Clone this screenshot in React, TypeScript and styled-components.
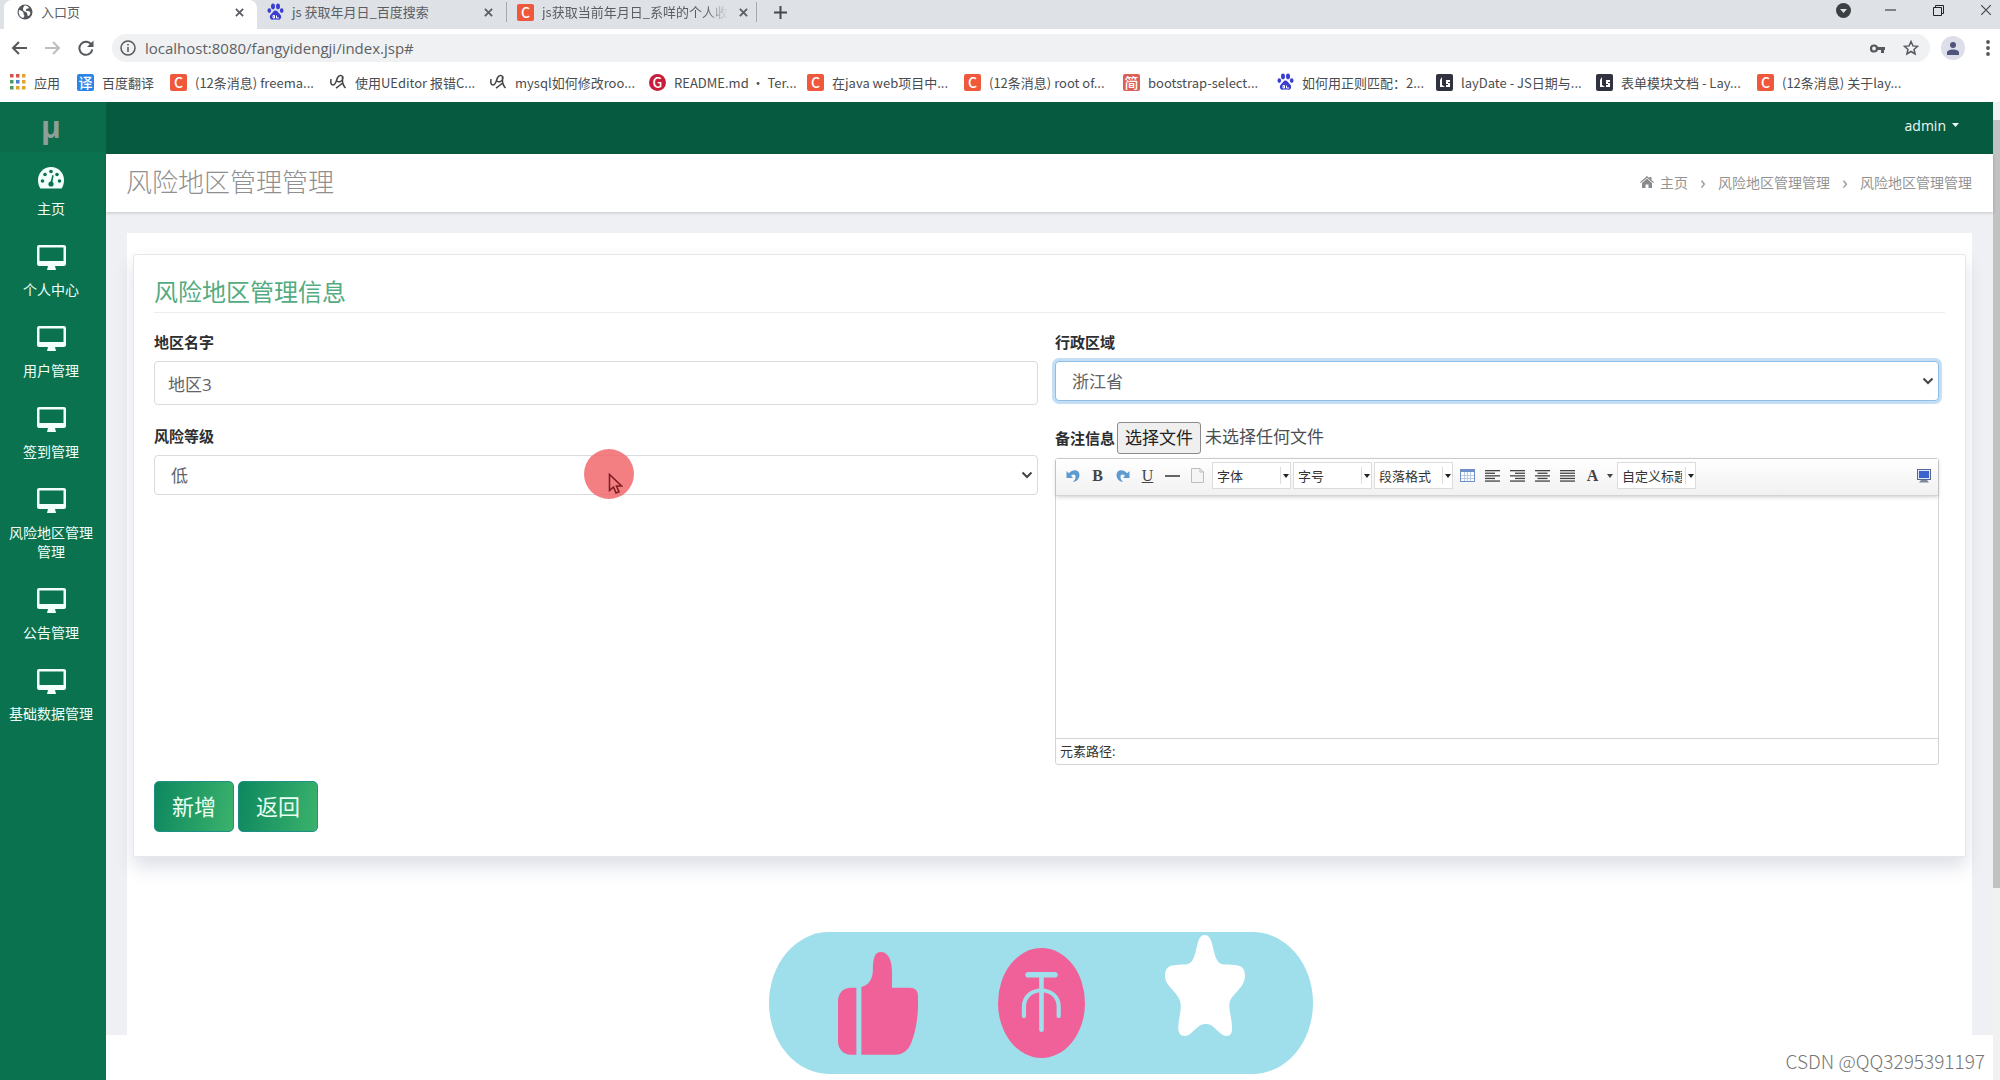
import React from "react";
import styled, { createGlobalStyle, css } from "styled-components";

const Global = createGlobalStyle`
  *, *::before, *::after { box-sizing: border-box; }
  body { margin: 0; background: #fff; }
  body, button, input, select, textarea {
    font-family: "Open Sans", "Noto Sans CJK SC", sans-serif;
  }
  h1, h2, p, ul, ol { margin: 0; padding: 0; list-style: none; }
  button { padding: 0; border: 0; background: none; color: inherit; }
  a { color: inherit; text-decoration: none; }
  svg { display: block; flex: none; }
`;

const Screen = styled.div`
  position: relative;
  display: flex;
  flex-direction: column;
  height: 100vh;
  overflow: hidden;
`;

/* ---------- browser frame ---------- */

const TabStrip = styled.div`
  display: flex;
  justify-content: space-between;
  height: 29px;
  flex: none;
  background: #dee1e6;
  color: #45494d;
`;

const Tabs = styled.div`
  display: flex;
  padding-left: 4px;
`;

const Tab = styled.div<{ $active?: boolean }>`
  display: flex;
  align-items: center;
  gap: 8px;
  width: ${(p) => (p.$active ? 253 : 249)}px;
  padding: 0 10px 5px ${(p) => (p.$active ? 13 : 10)}px;
  font-family: "Noto Sans CJK SC", sans-serif;
  font-size: 13px;
  color: #5a5e63;
  ${(p) =>
    p.$active &&
    css`
      background: #fff;
      border-radius: 8px 8px 0 0;
    `}
`;

const TabTitle = styled.span<{ $fade?: boolean }>`
  flex: 1;
  white-space: nowrap;
  line-height: 20px;
  ${(p) => p.$fade && css`mask-image: linear-gradient(90deg, #000 88%, transparent);`}
`;

const TabDivider = styled.span`
  width: 1px;
  height: 20px;
  margin-top: 2px;
  background: #a5a8ad;
`;

const IconButton = styled.button<{ $w?: number }>`
  display: flex;
  align-items: center;
  justify-content: center;
  flex: none;
  width: ${(p) => p.$w ?? 16}px;
  height: 24px;
`;

const WindowControls = styled.div`
  display: flex;
  height: 20px;
  align-items: center;

  button:last-child {
    padding-left: 10px;
  }
`;

const AddressRow = styled.div`
  display: flex;
  align-items: center;
  height: 38px;
  flex: none;
  padding-left: 2px;
  background: #fff;
  color: #55595d;
`;

const Omnibox = styled.div`
  display: flex;
  align-items: center;
  flex: 1;
  height: 28px;
  margin-left: 9px;
  padding: 0 3px 0 8px;
  border-radius: 14px;
  background: #f0f1f3;
`;

const UrlInput = styled.input`
  flex: 1;
  padding: 0 0 0 9px;
  border: 0;
  outline: 0;
  background: none;
  font-size: 15px;
  color: #5d6165;
`;

const Avatar = styled.span`
  display: flex;
  align-items: center;
  justify-content: center;
  width: 24px;
  height: 24px;
  border-radius: 50%;
  background: #dcdfea;
`;

const Bookmarks = styled.nav`
  display: flex;
  align-items: center;
  height: 35px;
  flex: none;
  padding: 0 10px 5px;
  background: #fff;
`;

const Bookmark = styled.a<{ $w: number }>`
  display: flex;
  align-items: center;
  gap: 8px;
  width: ${(p) => p.$w}px;
  flex: none;
  white-space: nowrap;
  font-family: "Noto Sans CJK SC", sans-serif;
  font-size: 13px;
  color: #4a4d50;
`;

const Favicon = styled.span<{ $bg: string; $round?: boolean }>`
  display: flex;
  align-items: center;
  justify-content: center;
  flex: none;
  width: 17px;
  height: 17px;
  border-radius: ${(p) => (p.$round ? "50%" : "2px")};
  background: ${(p) => p.$bg};
  color: #fff;
  font-size: 14px;
  line-height: 17px;
  font-weight: 500;
`;

/* ---------- application ---------- */

const Viewport = styled.div`
  display: flex;
  flex: 1;
  min-height: 0;
`;

const Sidebar = styled.aside`
  width: 106px;
  flex: none;
  background: #0b7250;
  color: #f0fff8;
`;

const Brand = styled.a`
  display: flex;
  align-items: center;
  justify-content: center;
  height: 50px;
  padding: 0 4px 2px 0;
  background: #0a6c4b;
  color: #8d9f96;
  font-size: 30px;
  font-weight: 700;
`;

const MenuItem = styled.a`
  display: flex;
  flex-direction: column;
  align-items: center;
  gap: 9px;
  padding: 12px 12px 15px 8px;
  font-size: 14px;
  line-height: 19px;
  text-align: center;
`;

const Main = styled.div`
  display: flex;
  flex-direction: column;
  flex: 1;
  min-width: 0;
`;

const TopBar = styled.header`
  display: flex;
  align-items: center;
  justify-content: flex-end;
  height: 52px;
  flex: none;
  padding: 0 34px 6px 0;
  background: #065a40;
`;

const UserButton = styled.button`
  display: flex;
  align-items: center;
  gap: 6px;
  color: #eef8f4;
  font-size: 14px;
`;

const PageHead = styled.div`
  display: flex;
  align-items: center;
  justify-content: space-between;
  height: 58px;
  flex: none;
  padding: 0 21px 2px 20px;
  background: #fff;
  box-shadow: 0 1px 3px rgba(0, 0, 0, 0.18);
  z-index: 1;
`;

const PageTitle = styled.h1`
  font-size: 26px;
  font-weight: 300;
  line-height: 36px;
  color: #8f8f8f;
`;

const Crumbs = styled.ol`
  display: flex;
  align-items: center;
  font-size: 14px;
  color: #949494;

  li {
    display: flex;
    align-items: center;
    gap: 6px;
  }
  li + li::before {
    content: "›";
    width: 30px;
    margin-right: -6px;
    text-align: center;
    font-size: 18px;
    line-height: 20px;
  }
`;

const Content = styled.main`
  display: flex;
  flex: 1;
  padding: 21px 21px 0;
  background: #eff0f3;
`;

const Panel = styled.div`
  flex: 1;
  padding: 21px 6px;
  background: #fff;
`;

const PageFoot = styled.div`
  height: 45px;
  flex: none;
  background: #fff;
`;

const Card = styled.section`
  padding: 18px 20px 24px;
  border: 1px solid #e6e7ea;
  border-radius: 2px;
  background: #fff;
  box-shadow: 0 10px 18px rgba(60, 70, 120, 0.17);
`;

const CardTitle = styled.h2`
  padding-bottom: 2px;
  border-bottom: 1px solid #ececee;
  font-size: 24px;
  font-weight: 400;
  line-height: 37px;
  color: #55ab80;
`;

const Form = styled.form`
  padding: 17px 6px 0 0;
`;

const Columns = styled.div`
  display: grid;
  grid-template-columns: 1fr 1fr;
  gap: 17px;
  margin-bottom: 16px;
`;

const Field = styled.div`
  margin-bottom: 19px;
`;

const Label = styled.label`
  font-size: 15px;
  font-weight: 700;
  line-height: 24px;
  color: #2c2e30;
`;

const FieldLabel = styled(Label)`
  display: block;
  margin-bottom: 7px;
`;

const control = css`
  display: block;
  width: 100%;
  border: 1px solid #d9dbde;
  border-radius: 4px;
  outline: 0;
  background: #fff;
  color: #5f6468;
  font-size: 17px;
`;

const TextInput = styled.input`
  ${control}
  height: 44px;
  padding: 0 13px;
`;

const SelectBox = styled.div`
  position: relative;
`;

const Select = styled.select<{ $focus?: boolean }>`
  ${control}
  appearance: none;
  height: 40px;
  padding: 0 16px;
  ${(p) =>
    p.$focus &&
    css`
      border-color: #90bde8;
      box-shadow: 0 0 0 3px #c3def5;
    `}
`;

const Chevron = styled.svg`
  position: absolute;
  right: 5px;
  top: 50%;
  margin-top: -4px;
  pointer-events: none;
`;

const FileRow = styled.div`
  display: flex;
  align-items: center;
  height: 32px;
  margin: 21px 0 4px;
`;

const FileInput = styled.input`
  position: absolute;
  width: 1px;
  height: 1px;
  opacity: 0;
`;

const FileButton = styled.button`
  height: 32px;
  margin: 0 4px 0 2px;
  padding: 0 7px;
  border: 1px solid #8b8b8b;
  border-radius: 3px;
  background: #efefef;
  color: #222;
  font-size: 17px;
  line-height: 28px;
`;

const FileName = styled.span`
  font-size: 17px;
  line-height: 28px;
  padding-bottom: 2px;
  color: #4c4f52;
`;

const Editor = styled.div`
  border: 1px solid #d4d4d4;
  border-radius: 3px;
`;

const EditorBar = styled.div`
  display: flex;
  align-items: center;
  gap: 2px;
  height: 37px;
  padding: 0 4px 3px;
  border-bottom: 1px solid #d4d4d4;
  background: linear-gradient(#fff, #f1f1f1);
  box-shadow: 0 1px 4px rgba(0, 0, 0, 0.2);
`;

const ToolGroup = styled.div<{ $push?: boolean }>`
  display: flex;
  align-items: center;
  ${(p) => p.$push && css`margin-left: auto;`}
`;

const Tool = styled(IconButton)`
  font-family: "Liberation Serif", serif;
  font-size: 16px;
  color: #444;
`;

const ToolSelectBox = styled.div`
  position: relative;
  width: 79px;

  svg {
    position: absolute;
    right: 0;
    top: 5px;
    pointer-events: none;
  }
`;

const ToolSelect = styled.select`
  display: block;
  appearance: none;
  width: 100%;
  height: 27px;
  padding: 0 13px 0 4px;
  border: 1px solid #dcdcdc;
  border-radius: 0;
  background: #fff;
  color: #333;
  font-size: 13px;
`;

const EditorArea = styled.textarea`
  display: block;
  width: 100%;
  height: 242px;
  border: 0;
  outline: 0;
  resize: none;
  background: transparent;
`;

const EditorPath = styled.div`
  height: 26px;
  padding-left: 4px;
  border-top: 1px solid #d4d4d4;
  font-size: 13px;
  line-height: 25px;
  color: #333;
`;

const Actions = styled.div`
  display: flex;
  gap: 4px;
`;

const ActionButton = styled.button`
  width: 80px;
  height: 51px;
  padding-bottom: 4px;
  border: 1px solid #1f9087;
  border-radius: 5px;
  background: linear-gradient(100deg, #0d885f, #3bb26c);
  color: #eafff3;
  font-size: 22px;
`;

const ScrollTrack = styled.div`
  width: 7px;
  flex: none;
  padding-top: 18px;
  background: #f1f1f1;
`;

const ScrollThumb = styled.div`
  height: 80%;
  background: #c1c1c1;
`;

/* ---------- overlays ---------- */

const Pointer = styled.div`
  position: absolute;
  left: 584px;
  top: 449px;
  width: 50px;
  height: 50px;
  padding: 24px 0 0 24px;
  border-radius: 50%;
  background: rgba(242, 103, 106, 0.84);
`;

const Reactions = styled.div`
  position: absolute;
  left: 769px;
  bottom: 6px;
  display: flex;
  align-items: center;
  gap: 80px;
  width: 544px;
  height: 142px;
  padding-left: 69px;
  border-radius: 60px / 71px;
  background: #9fdfeb;
`;

const StarIcon = styled.svg`
  align-self: flex-start;
  margin-top: 3px;
`;

const Watermark = styled.p`
  position: absolute;
  right: 15px;
  bottom: 7px;
  font-family: "Noto Sans CJK SC", sans-serif;
  font-size: 19px;
  font-weight: 300;
  line-height: 24px;
  color: #777;
`;

/* ---------- drawings ---------- */

const Cross = ({ size = 9, width = 2 }: { size?: number; width?: number }) => (
  <svg width={size} height={size} viewBox="0 0 10 10" stroke="currentColor" strokeWidth={width}>
    <path d="M1 1l8 8M9 1l-8 8" />
  </svg>
);

const Globe = () => (
  <svg width="16" height="16" viewBox="0 0 16 16">
    <circle cx="8" cy="8" r="7.5" fill="#53575b" />
    <path d="M2 6c2 0 3 1 4 2s0 2 1 3 0 2-1 3C3 13 1 10 2 6zM7 2c2-1 4 0 5 2-1 1-3 0-3 2s3 0 4 2-1 4-2 4 0-3-2-4-3-1-3-3 1-2 1-3z" fill="#fff" />
  </svg>
);

const Paw = () => (
  <svg width="17" height="18" viewBox="0 0 17 18" fill="#3a3fd0">
    <ellipse cx="6" cy="3.4" rx="2" ry="2.8" />
    <ellipse cx="11" cy="3.4" rx="2" ry="2.8" />
    <ellipse cx="2.3" cy="7.6" rx="1.8" ry="2.4" />
    <ellipse cx="14.7" cy="7.6" rx="1.8" ry="2.4" />
    <path d="M8.5 7.5c2 0 2.6 2 4 3.3 1.8 1.5 2 3 1.3 4.5-1 2.2-3.300 1.300-5.300 1.300s-4.300.9-5.300-1.300c-.7-1.500-.5-3 1.300-4.500C5.900 9.500 6.500 7.500 8.500 7.500z" />
    <path d="M6 12.500h1.500v2.500H6zM9.500 12.500v2.500H12" stroke="#fff" strokeWidth="1" fill="none" />
  </svg>
);

const Apps = () => {
  const colors = ["#d8524a", "#d8524a", "#e0a32e", "#4f9a62", "#4a7fd0", "#e0a32e", "#4f9a62", "#e0a32e", "#e0a32e"];
  return (
    <svg width="16" height="16" viewBox="0 0 16 16">
      {colors.map((c, i) => (
        <rect key={i} x={(i % 3) * 6} y={Math.floor(i / 3) * 6} width="3.5" height="3.5" fill={c} />
      ))}
    </svg>
  );
};

const Scribble = () => (
  <svg width="17" height="17" viewBox="0 0 17 17" fill="none" stroke="#444" strokeWidth="1.5">
    <path d="M1 5c-.5 4 0 6 2 6 3 0 3-5 5-8 1.500-2 5-2 5 1 0 3-4 5-6 3M12.500 3c-.5 5 0 8 3 11M6 14c2-1 5-4 7-5" />
  </svg>
);

const LayLogo = () => (
  <svg width="17" height="17" viewBox="0 0 17 17">
    <path d="M4 13V6l2-3v8l3 2zM10 6h4v2h-2v1h2v4h-4v-2h2v-1h-2z" fill="#fff" />
  </svg>
);

const Caret = ({ w = 7 }: { w?: number }) => (
  <svg width={w} height="4" viewBox="0 0 8 4" preserveAspectRatio="none">
    <path d="M0 0h8L4 4z" fill="currentColor" />
  </svg>
);

const Dashboard = () => (
  <svg width="28" height="26" viewBox="0 -2 28 26">
    <path d="M14 1C6.500 1 1 7 1 14c0 3 .8 6 2.300 8.500h21.400C26.200 20 27 17 27 14 27 7 21.500 1 14 1z" fill="#f2fffa" />
    <g fill="#0b7250">
      <circle cx="5.5" cy="15" r="1.8" />
      <circle cx="8" cy="8.5" r="1.8" />
      <circle cx="14" cy="5.5" r="1.8" />
      <circle cx="20" cy="8.5" r="1.8" />
      <circle cx="22.5" cy="15" r="1.8" />
      <circle cx="14" cy="18" r="2.6" />
      <path d="M13.300 17l2-8 1.400.4L15 18z" />
    </g>
  </svg>
);

const Monitor = () => (
  <svg width="29" height="26" viewBox="0 0 29 26" fill="#f2fffa">
    <path fillRule="evenodd" d="M2 0h25a2 2 0 0 1 2 2v17a2 2 0 0 1-2 2H2a2 2 0 0 1-2-2V2a2 2 0 0 1 2-2zm.5 2.500V16h24V2.500z" />
    <path d="M11 21h7l1 4H10z" />
  </svg>
);

const House = () => (
  <svg width="14" height="12" viewBox="0 0 14 12" fill="#8a8a8a">
    <path d="M7 0l2.500 2.200V1h2v3L14 6.200l-.8.8L7 1.800.8 7 0 6.200z" />
    <path d="M7 2.500l5 4.500V12H8.500V8.500h-3V12H2V7z" />
  </svg>
);

const SelectChevron = () => (
  <Chevron width="12" height="8" viewBox="0 0 12 8" fill="none" stroke="#444" strokeWidth="2">
    <path d="M1.500 1.500L6 6l4.500-4.500" />
  </Chevron>
);

const Undo = ({ flip }: { flip?: boolean }) => (
  <svg width="14" height="14" viewBox="0 0 14 14">
    <g transform={flip ? "translate(14 0) scale(-1 1)" : undefined}>
      <path d="M.5 2v7h6.500L5 6.800C7 5 9.500 5 9.500 8c0 2-1 3.500-2.500 5 4-.5 6.500-3.500 6.500-7C13.500 0 6.500 0 2.800 4.300z" fill="#5b9bd2" />
    </g>
  </svg>
);

const PageIcon = () => (
  <svg width="13" height="15" viewBox="0 0 13 15">
    <path d="M.5.5H9L12.500 4v10.500H.5z" fill="#f5f5f5" stroke="#bdbdbd" />
    <path d="M9 .5V4h3.500" fill="none" stroke="#bdbdbd" />
  </svg>
);

const TableIcon = () => (
  <svg width="15" height="13" viewBox="0 0 15 13">
    <rect x=".5" y=".5" width="14" height="12" fill="#fff" stroke="#6f8fc9" />
    <rect x="0" y="0" width="15" height="3" fill="#6f8fc9" />
    <path d="M4.500 3v9M7.500 3v9M10.500 3v9M1 6.500h13M1 9.500h13" stroke="#b9cbe8" />
  </svg>
);

const Align = ({ kind }: { kind: "left" | "right" | "center" | "justify" }) => (
  <svg width="15" height="12" viewBox="0 0 15 12" fill="#444">
    {[0, 1, 2, 3, 4].map((i) => {
      const w = kind === "justify" || i % 2 === 0 ? 15 : 10;
      const x = kind === "right" ? 15 - w : kind === "center" ? (15 - w) / 2 : 0;
      return <rect key={i} x={x} y={i * 2.6} width={w} height="1.3" />;
    })}
  </svg>
);

const ScreenIcon = () => (
  <svg width="14" height="14" viewBox="0 0 14 14">
    <rect x=".5" y=".5" width="13" height="10" fill="#dfe6f5" stroke="#56688f" />
    <rect x="2" y="2" width="10" height="7" fill="#3c62cc" />
    <path d="M4 11h6l2 2.500H2z" fill="#7d8899" />
  </svg>
);

/* ---------- parts ---------- */

const ToolPicker = ({ label }: { label: string }) => (
  <ToolSelectBox>
    <ToolSelect aria-label={label}>
      <option>{label}</option>
    </ToolSelect>
    <svg width="11" height="17" viewBox="0 0 11 17">
      <path d="M.5 0v17" stroke="#ddd" />
      <path d="M3 7h6l-3 4z" fill="#222" />
    </svg>
  </ToolSelectBox>
);

const csdn = <Favicon $bg="#f0583c">C</Favicon>;
const lay = (
  <Favicon $bg="#30333f">
    <LayLogo />
  </Favicon>
);

const bookmarks: { icon: React.ReactNode; text: string; w: number }[] = [
  { icon: <Apps />, text: "应用", w: 67 },
  { icon: <Favicon $bg="#2b85e8">译</Favicon>, text: "百度翻译", w: 93 },
  { icon: csdn, text: "(12条消息) freema...", w: 160 },
  { icon: <Scribble />, text: "使用UEditor 报错C...", w: 160 },
  { icon: <Scribble />, text: "mysql如何修改roo...", w: 159 },
  { icon: <Favicon $bg="#c71d3a" $round>G</Favicon>, text: "README.md · Ter...", w: 158 },
  { icon: csdn, text: "在java web项目中...", w: 157 },
  { icon: csdn, text: "(12条消息) root of...", w: 159 },
  { icon: <Favicon $bg="#dd6055">简</Favicon>, text: "bootstrap-select...", w: 154 },
  { icon: <Paw />, text: "如何用正则匹配：2...", w: 159 },
  { icon: lay, text: "layDate - JS日期与...", w: 160 },
  { icon: lay, text: "表单模块文档 - Lay...", w: 161 },
  { icon: csdn, text: "(12条消息) 关于lay...", w: 160 },
];

const menu = ["主页", "个人中心", "用户管理", "签到管理", "风险地区管理管理", "公告管理", "基础数据管理"];

const Browser = () => (
  <>
    <TabStrip>
      <Tabs>
        <Tab $active>
          <Globe />
          <TabTitle>入口页</TabTitle>
          <IconButton aria-label="关闭"><Cross /></IconButton>
        </Tab>
        <Tab>
          <Paw />
          <TabTitle>js 获取年月日_百度搜索</TabTitle>
          <IconButton aria-label="关闭"><Cross /></IconButton>
        </Tab>
        <TabDivider />
        <Tab>
          {csdn}
          <TabTitle $fade>js获取当前年月日_系咩的个人收</TabTitle>
          <IconButton aria-label="关闭"><Cross /></IconButton>
        </Tab>
        <TabDivider />
        <IconButton $w={46} aria-label="新标签页">
          <svg width="13" height="13" viewBox="0 0 13 13" stroke="currentColor" strokeWidth="2">
            <path d="M6.500 0v13M0 6.500h13" />
          </svg>
        </IconButton>
      </Tabs>
      <WindowControls>
        <IconButton $w={46} aria-label="标签搜索">
          <svg width="15" height="15" viewBox="0 0 15 15">
            <circle cx="7.5" cy="7.5" r="7.5" fill="#3c4043" />
            <path d="M4 6h7l-3.500 4z" fill="#dee1e6" />
          </svg>
        </IconButton>
        <IconButton $w={48} aria-label="最小化">
          <svg width="11" height="2" viewBox="0 0 11 2"><path d="M0 1h11" stroke="#222" /></svg>
        </IconButton>
        <IconButton $w={48} aria-label="还原">
          <svg width="11" height="11" viewBox="0 0 11 11" fill="none" stroke="#222">
            <path d="M.5 2.500h8v8h-8zM2.500 2.500v-2h8v8h-2" />
          </svg>
        </IconButton>
        <IconButton $w={38} aria-label="关闭窗口"><Cross size={12} width={1} /></IconButton>
      </WindowControls>
    </TabStrip>
    <AddressRow>
      <IconButton $w={34} aria-label="后退">
        <svg width="16" height="14" viewBox="0 0 16 14" fill="none" stroke="currentColor" strokeWidth="2">
          <path d="M16 7H2M8 1L2 7l6 6" />
        </svg>
      </IconButton>
      <IconButton $w={33} aria-label="前进">
        <svg width="16" height="14" viewBox="0 0 16 14" fill="none" stroke="#bcbec1" strokeWidth="2">
          <path d="M0 7h14M8 1l6 6-6 6" />
        </svg>
      </IconButton>
      <IconButton $w={34} aria-label="刷新">
        <svg width="16" height="16" viewBox="0 0 16 16" fill="none" stroke="currentColor" strokeWidth="2">
          <path d="M13.500 5A6.500 6.500 0 1 0 14.300 9.500" />
          <path d="M15.500.5v6.500H9z" fill="currentColor" stroke="none" />
        </svg>
      </IconButton>
      <Omnibox>
        <svg width="16" height="16" viewBox="0 0 16 16" fill="none" stroke="currentColor" strokeWidth="1.5">
          <circle cx="8" cy="8" r="7" />
          <path d="M8 7v5M8 4v1.600" />
        </svg>
        <UrlInput aria-label="地址" defaultValue="localhost:8080/fangyidengji/index.jsp#" />
        <IconButton $w={33} aria-label="密码">
          <svg width="15" height="9" viewBox="0 0 15 9">
            <circle cx="4" cy="4.5" r="3" fill="none" stroke="currentColor" strokeWidth="2.2" />
            <path d="M7 3h8v3h-1v3h-3V6H7z" fill="currentColor" />
          </svg>
        </IconButton>
        <IconButton $w={33} aria-label="收藏">
          <svg width="16" height="16" viewBox="0 0 16 16" fill="none" stroke="currentColor" strokeWidth="1.5">
            <path d="M8 1.500l1.900 4.400 4.700.4-3.600 3.100 1.100 4.600L8 11.500 3.900 14l1.100-4.600L1.400 6.300l4.700-.4z" />
          </svg>
        </IconButton>
      </Omnibox>
      <IconButton $w={46} aria-label="账户">
        <Avatar>
          <svg width="14" height="13" viewBox="0 0 14 13" fill="#50567a">
            <circle cx="7" cy="3" r="3" />
            <path d="M1 13V10.500C1 8.500 4 7.500 7 7.500s6 1 6 3V13z" />
          </svg>
        </Avatar>
      </IconButton>
      <IconButton $w={24} aria-label="菜单">
        <svg width="4" height="16" viewBox="0 0 4 16" fill="currentColor">
          <circle cx="2" cy="2" r="1.9" /><circle cx="2" cy="8" r="1.9" /><circle cx="2" cy="14" r="1.9" />
        </svg>
      </IconButton>
    </AddressRow>
    <Bookmarks>
      {bookmarks.map((b) => (
        <Bookmark key={b.text} href="#" $w={b.w}>
          {b.icon}
          {b.text}
        </Bookmark>
      ))}
    </Bookmarks>
  </>
);

const RemarkEditor = () => (
  <Editor>
    <EditorBar>
      <ToolGroup>
        <Tool type="button" $w={25} aria-label="撤销"><Undo /></Tool>
        <Tool type="button" $w={25}><b>B</b></Tool>
        <Tool type="button" $w={25} aria-label="重做"><Undo flip /></Tool>
        <Tool type="button" $w={25}><u>U</u></Tool>
        <Tool type="button" $w={25} aria-label="分隔线">
          <svg width="15" height="2" viewBox="0 0 15 2"><path d="M0 1h15" stroke="#333" strokeWidth="1.5" /></svg>
        </Tool>
        <Tool type="button" $w={25} aria-label="清空文档"><PageIcon /></Tool>
      </ToolGroup>
      <ToolPicker label="字体" />
      <ToolPicker label="字号" />
      <ToolPicker label="段落格式" />
      <ToolGroup>
        <Tool type="button" $w={25} aria-label="表格"><TableIcon /></Tool>
        <Tool type="button" $w={25} aria-label="左对齐"><Align kind="left" /></Tool>
        <Tool type="button" $w={25} aria-label="右对齐"><Align kind="right" /></Tool>
        <Tool type="button" $w={25} aria-label="居中"><Align kind="center" /></Tool>
        <Tool type="button" $w={25} aria-label="两端对齐"><Align kind="justify" /></Tool>
        <Tool type="button" $w={25}><b>A</b></Tool>
        <Tool type="button" $w={10} aria-label="字体颜色"><Caret w={6} /></Tool>
      </ToolGroup>
      <ToolPicker label="自定义标题" />
      <ToolGroup $push>
        <Tool type="button" $w={20} aria-label="全屏"><ScreenIcon /></Tool>
      </ToolGroup>
    </EditorBar>
    <EditorArea aria-label="备注信息" />
    <EditorPath>元素路径:</EditorPath>
  </Editor>
);

const RegionForm = () => (
  <Form onSubmit={(e) => e.preventDefault()}>
    <Columns>
      <div>
        <Field>
          <FieldLabel htmlFor="name">地区名字</FieldLabel>
          <TextInput id="name" defaultValue="地区3" />
        </Field>
        <FieldLabel htmlFor="level">风险等级</FieldLabel>
        <SelectBox>
          <Select id="level"><option>低</option></Select>
          <SelectChevron />
        </SelectBox>
      </div>
      <div>
        <FieldLabel htmlFor="province">行政区域</FieldLabel>
        <SelectBox>
          <Select id="province" $focus><option>浙江省</option></Select>
          <SelectChevron />
        </SelectBox>
        <FileRow>
          <Label htmlFor="file">备注信息</Label>
          <FileInput id="file" type="file" tabIndex={-1} />
          <FileButton type="button" onClick={() => document.getElementById("file")?.click()}>选择文件</FileButton>
          <FileName>未选择任何文件</FileName>
        </FileRow>
        <RemarkEditor />
      </div>
    </Columns>
    <Actions>
      <ActionButton type="submit">新增</ActionButton>
      <ActionButton type="button">返回</ActionButton>
    </Actions>
  </Form>
);

export default function App() {
  return (
    <Screen>
      <Global />
      <Browser />
      <Viewport>
        <Sidebar>
          <Brand href="#">μ</Brand>
          <nav>
            {menu.map((name, i) => (
              <MenuItem key={name} href="#">
                {i === 0 ? <Dashboard /> : <Monitor />}
                {name}
              </MenuItem>
            ))}
          </nav>
        </Sidebar>
        <Main>
          <TopBar>
            <UserButton>admin <Caret /></UserButton>
          </TopBar>
          <PageHead>
            <PageTitle>风险地区管理管理</PageTitle>
            <Crumbs>
              <li><House /><a href="#">主页</a></li>
              <li><a href="#">风险地区管理管理</a></li>
              <li>风险地区管理管理</li>
            </Crumbs>
          </PageHead>
          <Content>
            <Panel>
              <Card>
                <CardTitle>风险地区管理信息</CardTitle>
                <RegionForm />
              </Card>
            </Panel>
          </Content>
          <PageFoot />
        </Main>
        <ScrollTrack>
          <ScrollThumb />
        </ScrollTrack>
      </Viewport>

      <Pointer>
        <svg width="15" height="22" viewBox="0 0 15 22">
          <path d="M1.500 1.500v16l4-3.500 2.500 6 3-1.200-2.500-5.800h5z" fill="none" stroke="#7d1f24" strokeWidth="1.6" />
        </svg>
      </Pointer>

      <Reactions>
        <svg width="80" height="103" viewBox="257 155 209 308" preserveAspectRatio="none" fill="#f16199">
          <path d="M305 262h-14c-20 0-34 16-34 40v120c0 24 14 40 34 40h14z" />
          <path d="M318 462V260c20-6 29-24 30-48 0-36 4-57 21-57 19 0 29 24 29 60v47h46c14 0 22 8 22 24v30c0 40-8 84-18 112-8 22-22 34-42 34z" />
        </svg>
        <svg width="87" height="110" viewBox="674 145 228 329" preserveAspectRatio="none">
          <ellipse cx="788" cy="309.5" rx="114" ry="164.5" fill="#f16199" />
          <g fill="none" stroke="#9fdfeb" strokeLinecap="round">
            <path d="M754 225h68" strokeWidth="17" />
            <path d="M788 225v165" strokeWidth="12" />
            <path d="M742 349v-28c0-66 91-66 91 0v28" strokeWidth="11" />
          </g>
        </svg>
        <StarIcon width="80" height="101" viewBox="1110 103 210 304" preserveAspectRatio="none" fill="#fff">
          <path d="M1214 103c10 0 16 10 20 28 5 26 9 42 15 52 7 12 20 8 42 10 20 0 29 12 29 32 0 18-6 28-16 42-12 16-24 28-25 44-1 24 7 44 7 72 0 16-4 24-14 24-14 0-26-20-38-30-10-8-24-8-34 0-14 10-24 30-38 30-12 0-17-8-17-24 0-28 8-48 6-72-1-16-10-28-22-44-12-14-19-26-19-42 0-20 9-32 29-32 22-2 31 2 41-10 6-10 10-26 15-52 4-18 9-28 19-28z" />
        </StarIcon>
      </Reactions>
      <Watermark>CSDN @QQ3295391197</Watermark>
    </Screen>
  );
}
